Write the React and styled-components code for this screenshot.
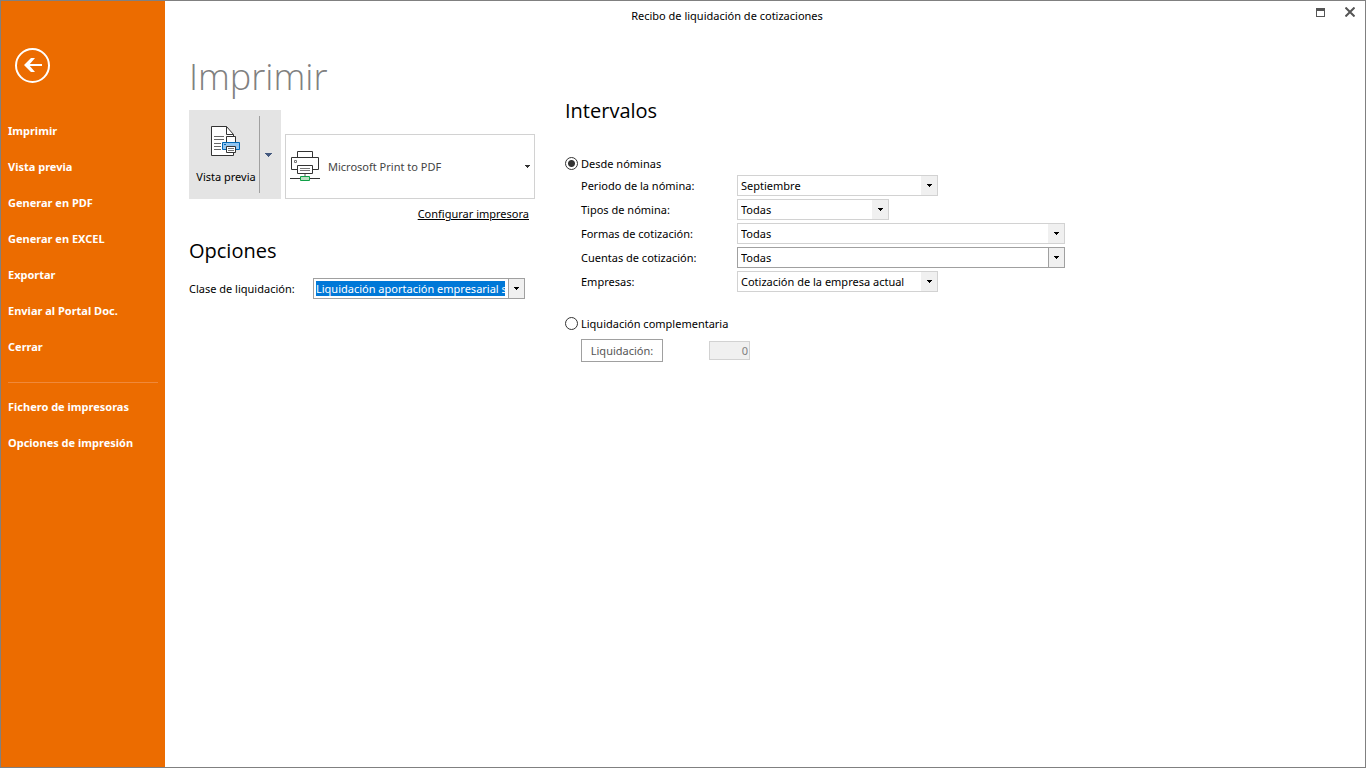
import React from "react";
import styled, { createGlobalStyle, css } from "styled-components";

const DISPLAY_FONT = `"Open Sans", "Noto Sans", sans-serif`;

const GlobalStyle = createGlobalStyle`
  *, *::before, *::after { box-sizing: border-box; }
  body {
    margin: 0;
    background: #fff;
    color: #000;
    font: 11px/16px "Noto Sans", "Open Sans", sans-serif;
  }
  button, input, select { font: inherit; color: inherit; margin: 0; }
`;

const Window = styled.div`
  display: flex;
  min-height: 100vh;
  border: 1px solid #808080;
`;

const Sidebar = styled.nav`
  flex: none;
  display: flex;
  flex-direction: column;
  width: 164px;
  padding: 47px 7px 0;
  background: #ec6c00;
  color: #fff;
`;

const BackButton = styled.button`
  width: 35px;
  height: 35px;
  margin: 0 0 30px 7px;
  padding: 0;
  border: 0;
  background: none;
  cursor: pointer;
  svg { display: block; }
`;

const MenuItem = styled.button`
  height: 36px;
  padding: 0;
  border: 0;
  background: none;
  text-align: left;
  font-weight: 700;
  white-space: nowrap;
  cursor: pointer;
`;

const Separator = styled.hr`
  width: 100%;
  margin: 17px 0 6px;
  border: 0;
  border-top: 1px solid #f0893a;
`;

const Page = styled.div`
  flex: 1;
  min-width: 0;
`;

const TitleBar = styled.header`
  display: flex;
  align-items: flex-start;
  height: 30px;
`;

const WindowTitle = styled.div`
  flex: 1;
  line-height: 30px;
  text-align: center;
`;

const WindowButton = styled.button`
  display: flex;
  align-items: center;
  justify-content: center;
  width: 30px;
  height: 22px;
  padding: 0;
  border: 0;
  background: none;
`;

const WindowButtons = styled.div`
  display: flex;
  width: 76px;
  justify-content: flex-end;
`;

const Columns = styled.main`
  display: flex;
  flex-wrap: wrap;
  gap: 30px;
  padding: 20px 24px;
`;

const PrintColumn = styled.section`
  width: 346px;
`;

const RangeColumn = styled.section`
  flex: 1;
  min-width: 500px;
  padding-top: 45px;
`;

const PageTitle = styled.h1`
  margin: 0 0 7px;
  color: #808080;
  font-family: ${DISPLAY_FONT};
  font-size: 36px;
  font-weight: 300;
  line-height: 52px;
`;

const SectionTitle = styled.h2`
  margin: 0;
  font-family: ${DISPLAY_FONT};
  font-size: 20px;
  font-weight: 400;
  line-height: 30px;
`;

const PrinterRow = styled.div`
  display: flex;
  align-items: flex-end;
  gap: 4px;
`;

const SplitButton = styled.div`
  display: flex;
  width: 92px;
  height: 89px;
  background: #e4e4e4;
`;

const PreviewButton = styled.button`
  display: flex;
  flex-direction: column;
  align-items: center;
  gap: 12px;
  width: 70px;
  padding: 16px 0 0 4px;
  border: 0;
  background: none;
  white-space: nowrap;
`;

const PreviewMenuButton = styled.button`
  display: flex;
  align-items: center;
  justify-content: center;
  width: 18px;
  margin: 6px 0;
  padding: 0;
  border: 0;
  border-left: 1px solid #a0a0a0;
  background: none;
`;

const PrinterButton = styled.button`
  flex: 1;
  display: flex;
  align-items: center;
  gap: 8px;
  height: 65px;
  padding: 0 4px;
  border: 1px solid #d2d2d2;
  background: #fff;
  color: #444;
  text-align: left;
`;

const PrinterName = styled.span`
  flex: 1;
`;

const ConfigLine = styled.div`
  padding: 7px 6px 0 0;
  margin-bottom: 14px;
  text-align: right;
`;

const ConfigLink = styled.a`
  color: #000;
  text-decoration: underline;
`;

const Field = styled.div`
  display: grid;
  grid-template-columns: ${(p) => p.$label}px auto;
  justify-content: start;
  align-items: center;
  height: 24px;
`;

const FieldLabel = styled.label`
  padding-top: 2px;
`;

const ClassField = styled(Field)`
  margin-top: 10px;
`;

const Combo = styled.div`
  display: grid;
  grid-template-columns: 1fr 16px;
  width: ${(p) => p.$width}px;
  height: 21px;
  border: 1px solid ${(p) => (p.$strong ? "#a0a0a0" : "#d2d2d2")};
`;

const Select = styled.select`
  grid-area: 1 / 1 / 2 / 3;
  width: 100%;
  height: 19px;
  padding: 2px 18px 0 3px;
  border: 0;
  border-radius: 0;
  outline: 0;
  appearance: none;
  background-color: #fff;
  ${(p) =>
    p.$selected &&
    css`
      padding: 2px 19px 2px 2px;
      background-color: #0078d7;
      background-clip: content-box;
      color: #fff;
    `}
`;

const ComboArrow = styled.span`
  grid-area: 1 / 2;
  z-index: 1;
  display: flex;
  align-items: center;
  justify-content: center;
  border-left: ${(p) => (p.$strong ? "1px solid #a0a0a0" : "0")};
  background: #f0f0f0;
  pointer-events: none;
`;

const RadioLabel = styled.label`
  display: flex;
  align-items: center;
  gap: 3px;
  height: 20px;
`;

const RadioText = styled.span`
  padding-top: 2px;
`;

const Radio = styled.input`
  appearance: none;
  width: 13px;
  height: 13px;
  border: 1px solid #333;
  border-radius: 50%;
  background: #fff;
  &:checked {
    background: radial-gradient(circle, #333 0 3px, #fff 4px);
  }
`;

const Group = styled.div`
  margin-top: ${(p) => p.$top}px;
`;

const Fields = styled.div`
  padding-left: 16px;
`;

const SettlementRow = styled.div`
  display: flex;
  align-items: center;
  gap: 46px;
  padding: 6px 0 0 16px;
`;

const SettlementButton = styled.button`
  width: 82px;
  height: 23px;
  padding: 0;
  border: 1px solid #a0a0a0;
  background: #fff;
  color: #555;
`;

const NumberInput = styled.input`
  width: 41px;
  height: 19px;
  padding: 0 1px;
  border: 1px solid #d2d2d2;
  background: #f0f0f0;
  text-align: right;
  &:disabled { color: #808080; }
`;

const Caret = ({ color = "#000", size = 5 }) => (
  <svg width={size} height={size === 7 ? 4 : 3} shapeRendering="crispEdges" aria-hidden="true">
    {size === 7 ? (
      <path d="M0 0h7v1h-1v1h-1v1h-1v1h-1v-1h-1v-1h-1v-1h-1z" fill={color} />
    ) : (
      <path d="M0 0h5v1h-1v1h-1v1h-1v-1h-1v-1h-1z" fill={color} />
    )}
  </svg>
);

const BackIcon = () => (
  <svg width="35" height="35" fill="none" stroke="#fff">
    <circle cx="17.5" cy="17.5" r="16.5" strokeWidth="2" />
    <path d="M11 17h16" strokeWidth="2" />
    <path d="M9 17l7-7h4l-6 7 6 7h-4z" fill="#fff" stroke="none" />
  </svg>
);

const PreviewIcon = () => (
  <svg width="30" height="31" fill="none" stroke="#333" aria-hidden="true">
    <path d="M.5 .5h15l7 8v21h-22z" fill="#fff" />
    <path d="M15.5 .5v8h7" />
    <path d="M3 10.500h10M3 13.500h10M3 17.500h7M3 20.500h7M3 23.500h7" stroke="#666" />
    <path d="M15.500 16.500v-6h9v6" fill="#fff" />
    <path d="M11.500 16.500h17v7h-17z" fill="#92c5f0" stroke="#0067b4" />
    <path d="M13 18.500h2" stroke="#0067b4" />
    <path d="M15.500 20.500h9v6h-9z" fill="#fff" />
    <path d="M17 22.500h6M17 24.500h6" stroke="#777" />
  </svg>
);

const PrinterIcon = () => (
  <svg width="30" height="31" fill="none" stroke="#333" aria-hidden="true">
    <path d="M7.500 6.500v-6h15v6" fill="#fff" />
    <path d="M7.500 18.500h-6v-12h27v12h-6" />
    <path d="M4.500 9.500h2v2h-2z" stroke="#777" />
    <path d="M7.500 14.500h15v8h-15z" fill="#fff" />
    <path d="M10 17.500h10M10 19.500h10" stroke="#777" />
    <path d="M15 23v2" stroke="#aaa" strokeWidth="2" />
    <path d="M0 27.500h30" />
    <path d="M10.500 25.500h9v4h-9z" fill="#b9dfc0" stroke="#10a047" />
  </svg>
);

const MaximizeIcon = () => (
  <svg width="9" height="9" shapeRendering="crispEdges">
    <path d="M0 0h9v9h-9zM1 3v5h7v-5z" fill="#555" fillRule="evenodd" />
  </svg>
);

const CloseIcon = () => (
  <svg width="10" height="10" stroke="#555" strokeWidth="2">
    <path d="M.5 .5l9 9M9.500 .5l-9 9" />
  </svg>
);

function ComboBox({ id, width, value, strong, selected }) {
  return (
    <Combo $width={width} $strong={strong}>
      <Select id={id} defaultValue={value} $selected={selected}>
        <option>{value}</option>
      </Select>
      <ComboArrow $strong={strong}>
        <Caret />
      </ComboArrow>
    </Combo>
  );
}

const ACTIONS = [
  "Imprimir",
  "Vista previa",
  "Generar en PDF",
  "Generar en EXCEL",
  "Exportar",
  "Enviar al Portal Doc.",
  "Cerrar",
];

const SETTINGS = ["Fichero de impresoras", "Opciones de impresión"];

const RANGES = [
  { id: "periodo", label: "Periodo de la nómina:", value: "Septiembre", width: 201 },
  { id: "tipos", label: "Tipos de nómina:", value: "Todas", width: 152 },
  { id: "formas", label: "Formas de cotización:", value: "Todas", width: 328 },
  { id: "cuentas", label: "Cuentas de cotización:", value: "Todas", width: 328, strong: true },
  { id: "empresas", label: "Empresas:", value: "Cotización de la empresa actual", width: 201 },
];

export default function App() {
  return (
    <>
      <GlobalStyle />
      <Window>
        <Sidebar>
          <BackButton aria-label="Volver">
            <BackIcon />
          </BackButton>
          {ACTIONS.map((name) => (
            <MenuItem key={name}>{name}</MenuItem>
          ))}
          <Separator />
          {SETTINGS.map((name) => (
            <MenuItem key={name}>{name}</MenuItem>
          ))}
        </Sidebar>
        <Page>
          <TitleBar>
            <WindowTitle>Recibo de liquidación de cotizaciones</WindowTitle>
            <WindowButtons>
              <WindowButton aria-label="Maximizar">
                <MaximizeIcon />
              </WindowButton>
              <WindowButton aria-label="Cerrar ventana">
                <CloseIcon />
              </WindowButton>
            </WindowButtons>
          </TitleBar>
          <Columns>
            <PrintColumn>
              <PageTitle>Imprimir</PageTitle>
              <PrinterRow>
                <SplitButton>
                  <PreviewButton>
                    <PreviewIcon />
                    Vista previa
                  </PreviewButton>
                  <PreviewMenuButton aria-label="Más opciones de vista previa">
                    <Caret size={7} color="#44597f" />
                  </PreviewMenuButton>
                </SplitButton>
                <PrinterButton>
                  <PrinterIcon />
                  <PrinterName>Microsoft Print to PDF</PrinterName>
                  <Caret color="#333" />
                </PrinterButton>
              </PrinterRow>
              <ConfigLine>
                <ConfigLink href="#configurar">Configurar impresora</ConfigLink>
              </ConfigLine>
              <SectionTitle>Opciones</SectionTitle>
              <ClassField $label={124}>
                <FieldLabel htmlFor="clase">Clase de liquidación:</FieldLabel>
                <ComboBox
                  id="clase"
                  width={212}
                  value="Liquidación aportación empresarial solidaridad"
                  strong
                  selected
                />
              </ClassField>
            </PrintColumn>
            <RangeColumn>
              <SectionTitle>Intervalos</SectionTitle>
              <Group $top={27}>
                <RadioLabel>
                  <Radio type="radio" name="intervalo" defaultChecked />
                  <RadioText>Desde nóminas</RadioText>
                </RadioLabel>
                <Fields>
                  {RANGES.map((r) => (
                    <Field key={r.id} $label={156}>
                      <FieldLabel htmlFor={r.id}>{r.label}</FieldLabel>
                      <ComboBox {...r} />
                    </Field>
                  ))}
                </Fields>
              </Group>
              <Group $top={20}>
                <RadioLabel>
                  <Radio type="radio" name="intervalo" />
                  <RadioText>Liquidación complementaria</RadioText>
                </RadioLabel>
                <SettlementRow>
                  <SettlementButton>Liquidación:</SettlementButton>
                  <NumberInput aria-label="Número de liquidación" defaultValue="0" disabled />
                </SettlementRow>
              </Group>
            </RangeColumn>
          </Columns>
        </Page>
      </Window>
    </>
  );
}
